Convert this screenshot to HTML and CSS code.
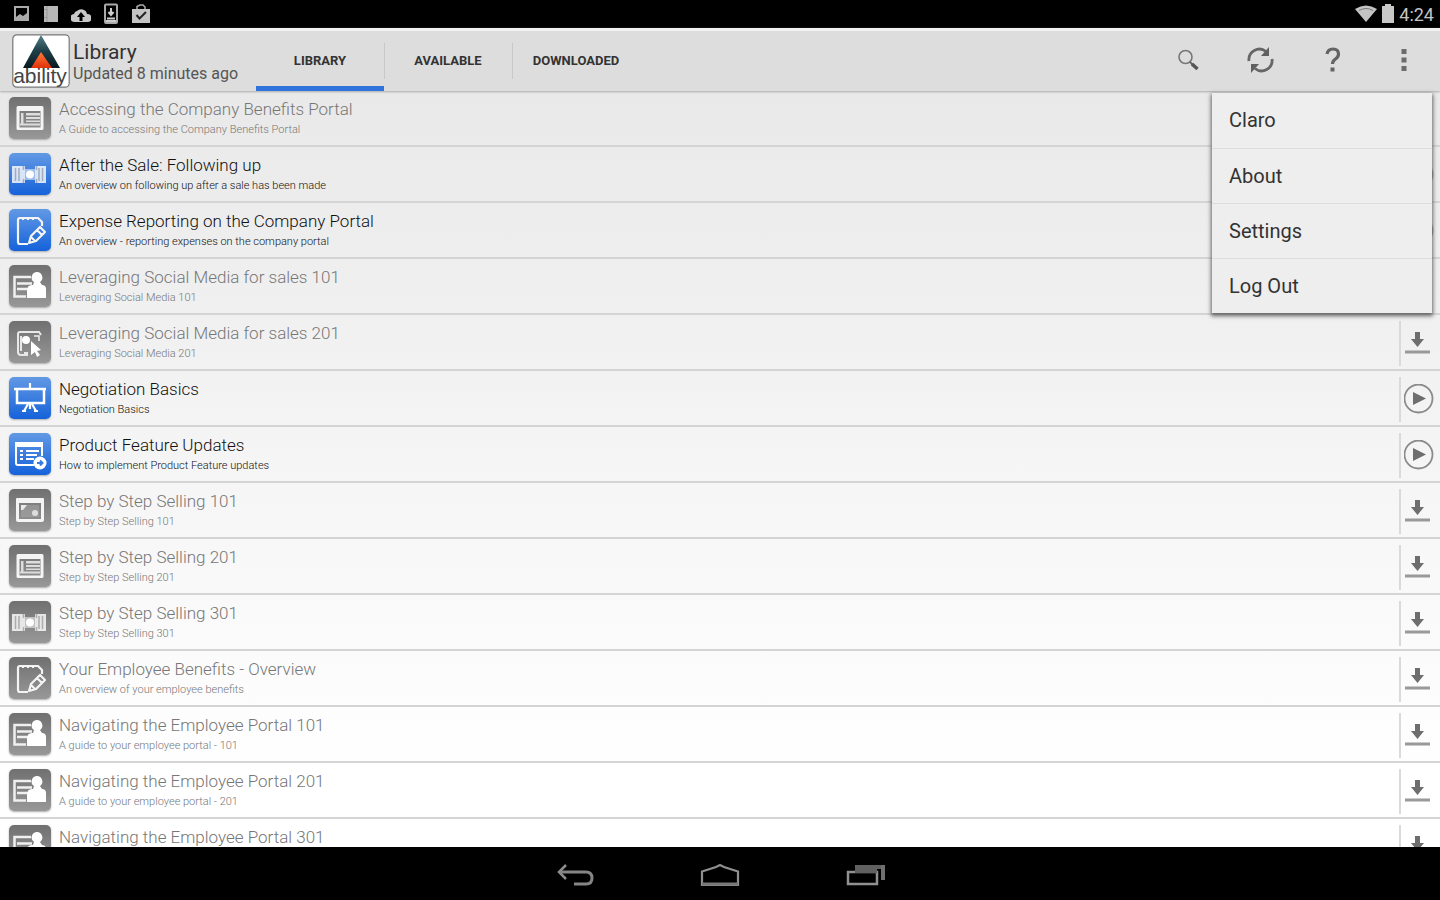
FILE: index.html
```html
<!DOCTYPE html>
<html lang="en">
<head>
<meta charset="utf-8">
<meta name="viewport" content="width=device-width, initial-scale=1">
<title>Library</title>
<link rel="stylesheet" href="styles.css">
</head>
<body>
<svg class="sprite" aria-hidden="true">
  <symbol id="i-download" viewBox="0 0 30 30"><path fill="#6e6e6e" d="M11 4h5v7h4l-6.500 8L7 11h4z"/><path fill="#999" d="M1 22.500h25v3H1z"/></symbol>
  <symbol id="i-play" viewBox="0 0 30 30"><circle cx="14.500" cy="14.500" r="14" fill="none" stroke="#8a8a8a" stroke-width="1.800"/><path fill="#6e6e6e" d="M9 8v13l13-6.500z"/></symbol>
  <symbol id="i-list" viewBox="0 0 42 42"><path fill="#f4f4f4" fill-rule="evenodd" d="M9 9h24q1.500 0 1.500 1.500v21q0 1.500-1.500 1.500H9q-1.500 0-1.500-1.500v-21Q7.500 9 9 9zM10.500 14v16.500h21V14z"/><path fill="#ddd" d="M12 16h2.500v10.500H31v2H11v-2h1zM17 16h14v2.500H17zM17 20h14v2H17zM17 23.500h14V25H17z"/></symbol>
  <symbol id="i-film" viewBox="0 0 42 42"><path fill="#fff" fill-opacity=".8" d="M3 13h13v17H3zM26 13h11v17H26z"/><path fill="#fff" fill-opacity=".5" d="M16 16h10v11H16z"/><path d="M6.500 15v13M10 15v13M30 15v13M33.500 15v13M14.500 13v4M14.500 26v4M27.500 13v4M27.500 26v4" stroke="#555" stroke-opacity=".4" stroke-width="1.500"/><circle cx="21" cy="21.500" r="4" fill="#fff"/></symbol>
  <symbol id="i-note" viewBox="0 0 42 42"><g fill="none" stroke="#f4f4f4" stroke-width="2.200" stroke-linejoin="round"><path d="M19 35h-8q-2 0-2-2V11q0-2 2-2h18l4 4v4M14 8v3M19 8v3M24 8v3"/><path d="M20 34l2-7 9-9 5 5-9 9zM28 21l5 5M22 28l4 4"/></g></symbol>
  <symbol id="i-person" viewBox="0 0 42 42"><path fill="none" stroke="#f0f0f0" stroke-width="2.500" d="M20 12H5.500v19.500H17M8 18.500h15M8 24h11M5 12h17"/><path fill="#fff" d="M27.500 7a5.500 5.500 0 0 1 3.500 10l2 3q4 0 4 4v9H18v-7q0-6 5-6h1l1-3a5.500 5.500 0 0 1 2.500-10z"/></symbol>
  <symbol id="i-touch" viewBox="0 0 42 42"><path fill="none" stroke="#e8e8e8" stroke-width="2" d="M19 34h-7q-3 0-3-3V13q0-2 2-2h19l2 3M12 15v15M15 32h4"/><circle cx="17" cy="19" r="4" fill="#fff"/><path fill="none" stroke="#eee" stroke-width="1.500" d="M25 15h5v5"/><path fill="#fff" d="M22 20l10 9-4 1 3 4-3 2-2-5-4 3z"/></symbol>
  <symbol id="i-board" viewBox="0 0 42 42"><path fill="none" stroke="#fff" stroke-width="2.500" d="M8 12v14h27V12M5 12h32"/><path fill="none" stroke="#fff" stroke-width="2.200" d="M21 6v5M19 27l-4 7M23 27l4 7M21 27v5M13 34h4M25 34h4"/></symbol>
  <symbol id="i-survey" viewBox="0 0 42 42"><path fill="none" stroke="#fff" stroke-width="2" d="M25 32H9q-2 0-2-2V10h26v13"/><path fill="#fff" d="M7 9h26v5H7zM11 17h3v2h-3zM17 17h13v2H17zM11 21h3v2h-3zM17 21h11v2H17zM11 25h3v2h-3zM17 25h8v2h-8z"/><circle cx="31" cy="30" r="6.500" fill="#fff"/><path fill="none" stroke="#3b7be0" stroke-width="2" d="M28 30h5M31 27.500l2.500 2.500-2.500 2.500"/></symbol>
  <symbol id="i-window" viewBox="0 0 42 42"><path fill="#f4f4f4" fill-rule="evenodd" d="M8 9h26q1 0 1 1v21q0 2-2 2H9q-2 0-2-2V10q0-1 1-1zM10 14v16h22V14z"/><path fill="#fff" fill-opacity=".15" d="M12 16h18v12H12z"/><path fill="#e8e8e8" d="M12 16h6l-4 5h-2z"/><circle cx="26" cy="24" r="3" fill="#ddd"/></symbol>
</svg>

<header class="status">
  <div class="status-group">
    <svg viewBox="0 0 18 20" width="18" height="20"><path fill="#aaa" fill-rule="evenodd" d="M1 2h15v15H1zM3 4v9l4-3 3 2 4-3V4z"/></svg>
    <svg viewBox="0 0 18 20" width="18" height="20"><path fill="#b8b8b8" d="M2 2h14v16H2z"/><path stroke="#999" d="M5 2v16M2 5.500h3M2 13.500h3"/></svg>
    <svg viewBox="0 0 20 20" width="20" height="20"><path fill="#c8c8c8" d="M4 18a4 4 0 0 1-1-8 4 4 0 0 1 3-3 6 6 0 0 1 10 3 4 4 0 0 1 1 8z"/><path fill="#000" d="M10 8l4 5h-2.500v4h-3v-4H6z"/></svg>
    <svg viewBox="0 0 18 22" width="18" height="22"><rect x="3" y="1.500" width="12" height="18.500" rx="1" fill="none" stroke="#aaa" stroke-width="2"/><path stroke="#ccc" stroke-width="2" fill="none" d="M9 5v6M6.500 9L9 12l2.500-3M5 15.500h8M4 18h10"/></svg>
    <svg viewBox="0 0 20 20" width="20" height="20"><path fill="#c4c4c4" d="M1 5h18v14H1z"/><path fill="none" stroke="#aaa" stroke-width="1.500" d="M6 5V2.500L9 1h3l2 2v2"/><path fill="none" stroke="#222" stroke-width="2" d="M5.500 11l3 3.500L15 8"/></svg>
  </div>
  <div class="status-group status-right">
    <svg viewBox="0 0 22 18" width="22" height="18"><path fill="#c4c4c4" d="M0 4Q11-3 22 4L11 17z"/><path fill="none" stroke="#777" d="M4 5.500q7-4 14 0"/></svg>
    <svg viewBox="0 0 14 20" width="14" height="20"><path fill="#c8c8c8" d="M4 0h6v2h3v17H1V2h3z"/></svg>
    <time>4:24</time>
  </div>
</header>

<div class="appbar">
  <svg class="logo" viewBox="0 0 58 54" role="img" aria-label="ability">
    <defs>
      <linearGradient id="peak" x1="0" y1="0" x2="0" y2="1"><stop offset="0" stop-color="#4f8088"/><stop offset=".5" stop-color="#1d3d46"/><stop offset="1" stop-color="#08191f"/></linearGradient>
      <linearGradient id="fire" x1="0" y1="0" x2="0" y2="1"><stop offset="0" stop-color="#ff7a3c"/><stop offset="1" stop-color="#e03208"/></linearGradient>
    </defs>
    <rect x=".8" y=".8" width="56.400" height="52.400" rx="4" fill="#fff" stroke="#777" stroke-width="1.200"/>
    <path fill="url(#peak)" d="M29 1l19 33H11z"/>
    <path fill="url(#fire)" d="M29 18l11 16H19z"/>
    <text x="28" y="49" text-anchor="middle" class="logo-text">ability</text>
  </svg>
  <div class="heading">
    <h1>Library</h1>
    <p>Updated 8 minutes ago</p>
  </div>
  <div class="tabs" role="tablist">
    <button class="tab active" role="tab" aria-selected="true">LIBRARY</button>
    <button class="tab" role="tab" aria-selected="false">AVAILABLE</button>
    <button class="tab" role="tab" aria-selected="false">DOWNLOADED</button>
  </div>
  <div class="tools">
    <button class="tool" aria-label="Search"><svg viewBox="0 0 28 28" width="28" height="28"><circle cx="11.500" cy="11" r="6.500" fill="none" stroke="#777" stroke-width="1.600"/><path stroke="#666" stroke-width="2" d="M16 16l3 3"/><path stroke="#555" stroke-width="3.500" d="M18 18l5.500 5"/></svg></button>
    <button class="tool" aria-label="Refresh"><svg viewBox="0 0 28 28" width="28" height="28"><path fill="none" stroke="#666" stroke-width="2.800" d="M3 15A10.500 10.500 0 0 1 20 5.500M26 13A10.500 10.500 0 0 1 9 22.500"/><path fill="#606060" d="M23 1v9h-8zM5 27v-9h8z"/></svg></button>
    <button class="tool" aria-label="Help"><svg viewBox="0 0 28 28" width="28" height="28"><path fill="none" stroke="#636363" stroke-width="3.200" d="M9 8q1-5 6-5 5.500 0 5.500 5 0 3-3 5t-3 5"/><path fill="#636363" d="M12.500 21.500h4v4h-4z"/></svg></button>
    <button class="tool" aria-label="More options" aria-expanded="true"><svg viewBox="0 0 28 28" width="28" height="28"><path fill="#6c6c6c" d="M11.500 3h5v5h-5zM11.500 11.500h5v5h-5zM11.500 20h5v5h-5z"/></svg></button>
  </div>
  <div class="menu" role="menu">
    <button role="menuitem">Claro</button>
    <button role="menuitem">About</button>
    <button role="menuitem">Settings</button>
    <button role="menuitem">Log Out</button>
  </div>
</div>

<main class="content">
  <ul class="courses">
    <li class="row"><svg class="badge"><use href="#i-list"/></svg><div class="info"><h2>Accessing the Company Benefits Portal</h2><p>A Guide to accessing the Company Benefits Portal</p></div><button class="action" aria-label="Download"><svg><use href="#i-download"/></svg></button></li>
    <li class="row ready"><svg class="badge"><use href="#i-film"/></svg><div class="info"><h2>After the Sale: Following up</h2><p>An overview on following up after a sale has been made</p></div><button class="action" aria-label="Play"><svg><use href="#i-play"/></svg></button></li>
    <li class="row ready"><svg class="badge"><use href="#i-note"/></svg><div class="info"><h2>Expense Reporting on the Company Portal</h2><p>An overview - reporting expenses on the company portal</p></div><button class="action" aria-label="Play"><svg><use href="#i-play"/></svg></button></li>
    <li class="row"><svg class="badge"><use href="#i-person"/></svg><div class="info"><h2>Leveraging Social Media for sales 101</h2><p>Leveraging Social Media 101</p></div><button class="action" aria-label="Download"><svg><use href="#i-download"/></svg></button></li>
    <li class="row"><svg class="badge"><use href="#i-touch"/></svg><div class="info"><h2>Leveraging Social Media for sales 201</h2><p>Leveraging Social Media 201</p></div><button class="action" aria-label="Download"><svg><use href="#i-download"/></svg></button></li>
    <li class="row ready"><svg class="badge"><use href="#i-board"/></svg><div class="info"><h2>Negotiation Basics</h2><p>Negotiation Basics</p></div><button class="action" aria-label="Play"><svg><use href="#i-play"/></svg></button></li>
    <li class="row ready"><svg class="badge"><use href="#i-survey"/></svg><div class="info"><h2>Product Feature Updates</h2><p>How to implement Product Feature updates</p></div><button class="action" aria-label="Play"><svg><use href="#i-play"/></svg></button></li>
    <li class="row"><svg class="badge"><use href="#i-window"/></svg><div class="info"><h2>Step by Step Selling 101</h2><p>Step by Step Selling 101</p></div><button class="action" aria-label="Download"><svg><use href="#i-download"/></svg></button></li>
    <li class="row"><svg class="badge"><use href="#i-list"/></svg><div class="info"><h2>Step by Step Selling 201</h2><p>Step by Step Selling 201</p></div><button class="action" aria-label="Download"><svg><use href="#i-download"/></svg></button></li>
    <li class="row"><svg class="badge"><use href="#i-film"/></svg><div class="info"><h2>Step by Step Selling 301</h2><p>Step by Step Selling 301</p></div><button class="action" aria-label="Download"><svg><use href="#i-download"/></svg></button></li>
    <li class="row"><svg class="badge"><use href="#i-note"/></svg><div class="info"><h2>Your Employee Benefits - Overview</h2><p>An overview of your employee benefits</p></div><button class="action" aria-label="Download"><svg><use href="#i-download"/></svg></button></li>
    <li class="row"><svg class="badge"><use href="#i-person"/></svg><div class="info"><h2>Navigating the Employee Portal 101</h2><p>A guide to your employee portal - 101</p></div><button class="action" aria-label="Download"><svg><use href="#i-download"/></svg></button></li>
    <li class="row"><svg class="badge"><use href="#i-person"/></svg><div class="info"><h2>Navigating the Employee Portal 201</h2><p>A guide to your employee portal - 201</p></div><button class="action" aria-label="Download"><svg><use href="#i-download"/></svg></button></li>
    <li class="row"><svg class="badge"><use href="#i-person"/></svg><div class="info"><h2>Navigating the Employee Portal 301</h2></div><button class="action" aria-label="Download"><svg><use href="#i-download"/></svg></button></li>
  </ul>
</main>

<nav class="navbar" aria-label="System">
  <button aria-label="Back"><svg viewBox="0 0 40 24" width="40" height="24"><path fill="none" stroke="#858585" stroke-width="3" d="M6 8h25q6 0 6 6t-6 6H19"/><path fill="none" stroke="#8c8c8c" stroke-width="2.500" d="M11 1L4 8l7 7"/></svg></button>
  <button aria-label="Home"><svg viewBox="0 0 40 24" width="40" height="24"><path fill="none" stroke="#909090" stroke-width="2.200" d="M2 21V7.500L16 3l4-2 4 2 14 4.500V21z"/><path stroke="#777" stroke-width="3" d="M2 20h36"/></svg></button>
  <button aria-label="Recent apps"><svg viewBox="0 0 40 24" width="40" height="24"><path fill="none" stroke="#909090" stroke-width="2.500" d="M3 8h29v12H3z"/><path fill="#606060" d="M10 1h30v4H10zM10 5h22v4H10z"/><path fill="#707070" d="M36 1h4v15h-4z"/></svg></button>
</nav>
</body>
</html>
```
FILE: styles.css
```css
* {
  box-sizing: border-box;
}

body {
  margin: 0;
  height: 100vh;
  display: flex;
  flex-direction: column;
  background: #000;
  font-family: Roboto, "Liberation Sans", sans-serif;
  overflow: hidden;
}

h1, h2, p, ul {
  margin: 0;
  padding: 0;
  font-weight: 400;
}

button {
  margin: 0;
  padding: 0;
  border: 0;
  background: none;
  color: inherit;
  font: inherit;
  cursor: pointer;
}

svg {
  display: block;
  flex: none;
}

.sprite {
  position: absolute;
  width: 0;
  height: 0;
}

.status {
  flex: none;
  height: 28px;
  padding: 0 6px 0 13px;
  display: flex;
  align-items: center;
  justify-content: space-between;
  color: #c4c4c4;
  font-size: 18px;
}

.status-group {
  display: flex;
  align-items: center;
  gap: 11px;
}

.status-right {
  gap: 4px;
}

.appbar {
  flex: none;
  position: relative;
  z-index: 1;
  height: 63px;
  padding-left: 12px;
  display: flex;
  align-items: stretch;
  background: #ddd;
  border-top: 3px solid #f2f2f2;
  box-shadow: 0 1px 2px #aaa;
}

.logo {
  width: 58px;
  height: 54px;
  margin-top: 3px;
}

.logo-text {
  font: 21px "Liberation Sans", sans-serif;
  fill: #444;
}

.heading {
  width: 186px;
  padding: 9px 0 0 3px;
  color: #333;
  white-space: nowrap;
}

.heading h1 {
  font-size: 21px;
  line-height: 24px;
}

.heading p {
  font-size: 16px;
  line-height: 20px;
  color: #555;
}

.tabs {
  display: flex;
  align-items: stretch;
}

.tab {
  position: relative;
  width: 128px;
  padding-top: 4px;
  border-bottom: 5px solid transparent;
  color: #333;
  font-size: 13px;
  font-weight: 700;
}

.tab.active {
  border-color: #2f74dc;
}

.tab + .tab::before {
  content: "";
  position: absolute;
  left: 0;
  top: 12px;
  height: 36px;
  border-left: 1px solid #c8c8c8;
}

.tools {
  margin-left: auto;
  display: flex;
}

.tool {
  width: 72px;
  padding-bottom: 2px;
  display: grid;
  place-items: center;
}

.menu {
  position: absolute;
  top: 62px;
  right: 8px;
  width: 220px;
  display: flex;
  flex-direction: column;
  background: #eee;
  box-shadow: 0 2px 4px 1px #666;
}

.menu button {
  height: 55px;
  padding: 0 17px 1px;
  text-align: left;
  color: #333;
  font-size: 20px;
}

.menu button + button {
  border-top: 1px solid #ddd;
}

.content {
  flex: 1;
  min-height: 0;
  overflow: hidden;
  background: linear-gradient(#e9e9e9, #fff 90%);
}

.courses {
  list-style: none;
}

.row {
  height: 56px;
  padding-left: 9px;
  display: flex;
  align-items: flex-start;
  border-bottom: 2px solid #d4d4d4;
  color: #777;
}

.badge {
  width: 42px;
  height: 42px;
  margin-top: 6px;
  border-radius: 5px;
  background: linear-gradient(#707070, #989898);
  box-shadow: 0 1px 2px #aaa;
}

.info {
  flex: 1;
  padding: 8px 0 0 8px;
  font-weight: 300;
}

.info h2 {
  font-size: 17px;
  font-weight: inherit;
  line-height: 21px;
}

.info p {
  font-size: 11px;
  font-weight: inherit;
  line-height: 20px;
}

.ready {
  color: #111;
}

.ready .badge {
  background: linear-gradient(#6299e4, #1562da);
}

.action {
  width: 41px;
  height: 45px;
  margin-top: 6px;
  padding: 0 0 2px 3px;
  border-left: 2px solid #dadada;
}

.action svg {
  width: 30px;
  height: 30px;
}

.navbar {
  flex: none;
  height: 53px;
  padding-top: 4px;
  display: flex;
  align-items: center;
  justify-content: center;
  gap: 105px;
  background: #000;
}
```
